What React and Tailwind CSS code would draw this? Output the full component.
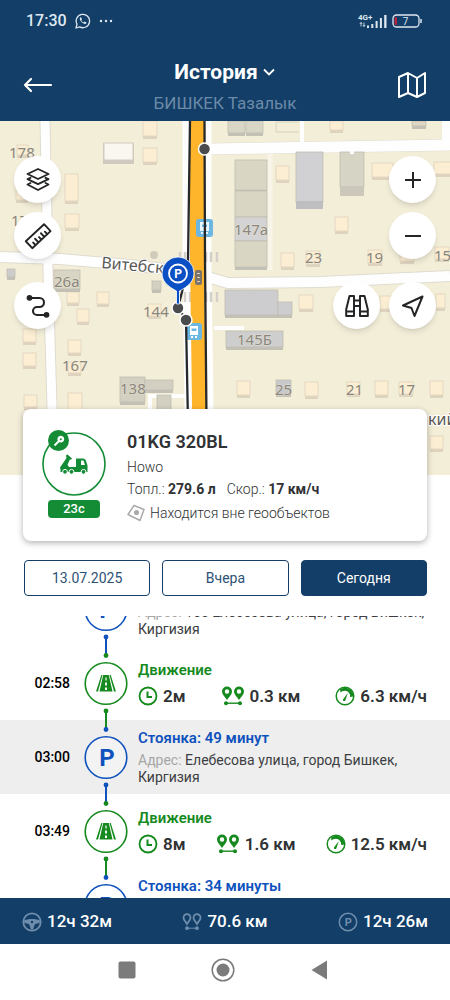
import React, { useLayoutEffect, useRef, useState } from 'react';

const GREEN = '#168a1e';
const BLUE = '#0f52bd';

const events = [
    { time: '02:15', type: 'stop', title: 'Стоянка: 43 минуты', address: '165 Елебесова улица, город Бишкек, Киргизия' },
    { time: '02:58', type: 'move', title: 'Движение', duration: '2м', distance: '0.3 км', speed: '6.3 км/ч' },
    { time: '03:00', type: 'stop', title: 'Стоянка: 49 минут', address: 'Елебесова улица, город Бишкек, Киргизия', active: true },
    { time: '03:49', type: 'move', title: 'Движение', duration: '8м', distance: '1.6 км', speed: '12.5 км/ч' },
    { time: '03:57', type: 'stop', title: 'Стоянка: 34 минуты', address: 'Елебесова улица, город Бишкек, Киргизия' },
];

const days = ['13.07.2025', 'Вчера', 'Сегодня'];

// x, y, width, height
const houses = [
    [143, 121, 14, 15], [143, 148, 14, 14], [65, 174, 13, 27], [65, 214, 14, 14], [16, 188, 12, 12], [17, 145, 11, 10],
    [67, 292, 12, 11], [97, 292, 12, 12], [77, 309, 12, 13], [23, 329, 13, 13], [23, 353, 13, 13], [68, 340, 13, 13],
    [68, 362, 13, 11], [24, 395, 13, 12], [68, 393, 14, 28], [24, 416, 13, 12], [148, 304, 13, 12],
    [330, 121, 13, 9], [276, 166, 13, 14], [372, 163, 21, 14], [434, 162, 22, 12], [335, 217, 13, 14], [281, 253, 13, 14],
    [306, 251, 14, 13], [368, 250, 14, 13], [400, 249, 14, 12], [435, 247, 14, 12], [299, 295, 14, 14], [380, 296, 11, 13],
    [436, 294, 9, 14], [237, 381, 13, 14], [305, 382, 13, 14], [347, 382, 13, 12], [375, 381, 13, 14], [399, 382, 14, 12],
    [430, 381, 13, 14], [430, 436, 13, 13], [334, 298, 10, 12],
];

const blocks = [
    [228, 121, 17, 12, '#d8d6c4'], [246, 121, 17, 12, '#d8d6c4'], [235, 160, 32, 30, '#d9d7c4'], [235, 191, 32, 26, '#d9d7c4'],
    [235, 217, 32, 24, '#d3d3d3'], [235, 241, 32, 26, '#d9d7c4'], [296, 152, 27, 50, '#d1d1d3'], [340, 152, 24, 35, '#d6d4c4'],
    [54, 270, 26, 19, '#d9d5c4'], [120, 377, 25, 25, '#d3d0c2'], [145, 380, 28, 10, '#d3d0c2'], [157, 395, 14, 20, '#d3d0c2'],
    [225, 290, 53, 25, '#cdcdd0'], [278, 302, 14, 13, '#cdcdd0'], [226, 331, 57, 16, '#cecece'], [276, 380, 15, 14, '#c9c9cb'],
    [152, 281, 9, 9, '#d3d0c2'], [7, 269, 8, 8, '#cccccc'], [412, 121, 14, 5, '#ded6c2'],
];

const labels = [
    ['178', 9, 158], ['17', 11, 226], ['26а', 54, 287], ['144', 143, 317], ['167', 62, 371], ['138', 120, 394],
    ['147а', 234, 235], ['145Б', 237, 345], ['23', 305, 263], ['19', 366, 263], ['15', 434, 261], ['25', 275, 395],
    ['21', 346, 395], ['17', 398, 395],
];

const MapCanvas = () => (
    <svg viewBox="0 121 450 354" preserveAspectRatio="xMidYMin slice" className="block w-full h-full" aria-hidden="true">
        <rect x="0" y="121" width="450" height="354" fill="#f3eed8" />
        <g fill="none" stroke="#dfdcd0" strokeWidth="12">
            <path d="M45 121 48 270 54 475" strokeWidth="11" />
            <path d="M0 257 60 259 130 265 190 272 228 283 320 282 450 276" />
            <path d="M208 149 450 145" />
        </g>
        <g fill="none" stroke="#fefefe" strokeWidth="10">
            <path d="M197 121 197 260 200 475" strokeWidth="29" />
            <path d="M45 121 48 270 54 475" strokeWidth="9" />
            <path d="M0 257 60 259 130 265 190 272 228 283 320 282 450 276" />
            <path d="M208 149 450 145" strokeWidth="11" />
            <path d="M302 121V145" strokeWidth="4" />
            <path d="M446 121V145" strokeWidth="8" />
            <path d="M214 328H244" strokeWidth="4" />
            <path d="M150 415V396H186" strokeWidth="4" />
            <path d="M270 154V270" stroke="#f8f5e8" strokeWidth="5" />
        </g>
        <path d="M299 132H276V122H299" fill="none" stroke="#d6d2c4" />
        {houses.map(([x, y, w, h], i) => (
            <g key={i}>
                <rect x={x} y={y} width={w} height={h + 3} fill="#ded3bf" />
                <rect x={x} y={y} width={w} height={h} fill="#fceed3" stroke="#e4d8c1" />
            </g>
        ))}
        {blocks.map(([x, y, w, h, fill], i) => (
            <g key={i}>
                <rect x={x} y={y} width={w} height={h + 3} fill="#c3c0b6" />
                <rect x={x} y={y} width={w} height={h} fill={fill} stroke="#c0bdb1" strokeWidth="0.8" />
            </g>
        ))}
        <rect x="340" y="186" width="24" height="10" fill="#cbc7ba" />
        <rect x="296" y="201" width="27" height="8" fill="#bebec1" />
        <path d="M352 148V154" stroke="#fefefe" strokeWidth="4" />
        <rect x="103" y="143" width="31" height="21" fill="#cfcac0" />
        <rect x="104" y="143" width="29" height="17" fill="#faf7f0" stroke="#d0ccc0" />
        <circle cx="154" cy="255" r="4" fill="#d0cbbb" />
        <g stroke="#d3cfc9" strokeWidth="2.500">
            <path d="M180 252v10M185 252v10M206 252v10M211 252v10M217 252v10M185 292v10M190 292v10M206 292v10M211 292v10M217 292v10" />
        </g>
        <g className="font-['Noto_Sans',sans-serif] text-[15px]" fill="#8a857d" stroke="#f3eed8" strokeOpacity="0.6" strokeWidth="1" paintOrder="stroke">
            {labels.map(([text, x, y], i) => (
                <text key={i} x={x} y={y}>{text}</text>
            ))}
        </g>
        <g className="font-['Noto_Sans',sans-serif] text-[16px]" fill="#5b5955" stroke="#ffffff" strokeWidth="2" paintOrder="stroke">
            <text x="101" y="268" transform="rotate(5 101 268)">Витебск</text>
            <text x="428" y="425">кий</text>
        </g>
        <path d="M197 121 197 260 200 475" fill="none" stroke="#ffb52b" strokeWidth="14" />
        <g>
            <rect x="196" y="219" width="17" height="18" rx="3" fill="#6cb6e2" />
            <path d="M200 222h9v9h-9z" fill="#e9f5fc" />
            <path d="M202 224.500h5v2.500h-5z" fill="#6cb6e2" />
            <path d="M201 233h2M206 233h2" stroke="#e9f5fc" strokeWidth="2" />
            <rect x="186" y="323" width="16" height="17" rx="3" fill="#6cb6e2" />
            <path d="M190 326h8v9h-8z" fill="#fff" />
            <path d="M191.500 328.500h5v2.500h-5z" fill="#6cb6e2" />
            <path d="M191 337h2M195 337h2" stroke="#fff" strokeWidth="2" />
            <rect x="195" y="270" width="7" height="15" rx="2" fill="#7a746a" />
            <path d="M198.500 273v1M198.500 277v1M198.500 281v1" stroke="#e9e3d6" strokeWidth="2.500" />
        </g>
        <g fill="none" stroke="#26282a" strokeWidth="2.300">
            <path d="M204.500 121 205 260 207 475" />
            <path d="M190 121 188 262 182 292 178 307 186 320 189 475" />
        </g>
        <g fill="#4a4b4d" stroke="#fff" strokeWidth="1.500">
            <circle cx="204.500" cy="149" r="6" />
            <circle cx="178" cy="308" r="6" />
            <circle cx="186" cy="320" r="6" />
        </g>
        <path d="M178 303V280" stroke="#fff" strokeWidth="4" />
        <path d="M178 257a16 16 0 0 1 16 16c0 8-5 13-14.500 18v13h-3v-13C167 286 162 281 162 273a16 16 0 0 1 16-16Z" fill="#0b4fc4" stroke="#fff" strokeWidth="0.8" />
        <circle cx="178" cy="273.500" r="9" fill="none" stroke="#fff" strokeWidth="1.800" />
        <text x="178" y="278" textAnchor="middle" fill="#fff" className="font-['Roboto',sans-serif] text-[12px] font-bold">P</text>
    </svg>
);

const MapButton = ({ label, children }) => (
    <button aria-label={label} className="size-[47px] rounded-full bg-white shadow-md flex items-center justify-center text-[#242526]">
        <svg viewBox="0 0 24 24" className="size-6 overflow-visible" fill="none" stroke="currentColor" strokeWidth="2" strokeLinejoin="round" strokeLinecap="round">
            {children}
        </svg>
    </button>
);

const ClockIcon = () => (
    <svg viewBox="0 0 20 20" className="size-5" fill="none" stroke="currentColor" strokeWidth="1.800">
        <circle cx="10" cy="10" r="8.500" />
        <path d="M9.500 5.500v5.500h4.500" strokeWidth="2" />
    </svg>
);

const DistanceIcon = () => (
    <svg viewBox="0 0 24 20" className="w-6 h-5" fill="currentColor">
        <path fillRule="evenodd" d="M6 .5a5 5 0 0 1 5 5C11 8.500 8 11 6 14 4 11 1 8.500 1 5.500a5 5 0 0 1 5-5Zm0 2.800a2.200 2.200 0 1 0 0 4.400 2.200 2.200 0 0 0 0-4.400Z" />
        <path fillRule="evenodd" d="M18 .5a5 5 0 0 1 5 5c0 3-3 5.500-5 8.500-2-3-5-5.500-5-8.500a5 5 0 0 1 5-5Zm0 2.800a2.200 2.200 0 1 0 0 4.400 2.200 2.200 0 0 0 0-4.400Z" />
        <circle cx="5" cy="17.200" r="2" />
        <circle cx="19" cy="17.200" r="2" />
        <path d="M5 16.500h14v1.400H5z" />
    </svg>
);

const SpeedIcon = () => (
    <svg viewBox="0 0 20 20" className="size-5">
        <circle cx="10" cy="10" r="8.800" fill="none" stroke="currentColor" strokeWidth="1.500" />
        <path d="M5 3.500A8.500 8.500 0 0 1 18.500 10.500l-3.300.5A5.600 5.600 0 0 0 10 4.800C8 4.800 6.500 5.500 5.500 6.500Z" fill="currentColor" />
        <path d="m12.800 7-4.300 5.700a1.300 1.300 0 1 0 2 1.200Z" fill="currentColor" />
    </svg>
);

const Marker = ({ type, prev, next }) => {
    const colorOf = (t) => (t === 'move' ? GREEN : BLUE);
    const color = colorOf(type);
    return (
        <svg viewBox="0 0 44 74" className="w-11 h-[74px] shrink-0" aria-hidden="true">
            {prev && (
                <>
                    <path d="M22 0v10" stroke={colorOf(prev)} strokeWidth="2" />
                    <circle cx="22" cy="9.500" r="2.400" fill={color} />
                </>
            )}
            {next && (
                <>
                    <path d="M22 65v9" stroke={color} strokeWidth="2" />
                    <circle cx="22" cy="65" r="2.400" fill={color} />
                </>
            )}
            <circle cx="22" cy="37.500" r="20.800" fill="#fff" fillOpacity={type === 'stop' ? 0.3 : 1} stroke={color} strokeWidth="1.600" />
            {type === 'move' ? (
                <g fill={color}>
                    <path d="M17.300 29h1.200l-4.500 16.500h-2ZM26.700 29h-1.200l4.500 16.500h2Z" />
                    <path d="M19.200 29h5.600L28.500 45.500h-13Z" />
                    <path d="M21.400 31.500h1.200v3h-1.200zM21.100 36.500h1.800v3h-1.800zM21 41.500h2v2.500h-2z" fill="#fff" />
                </g>
            ) : (
                <text x="23" y="46" textAnchor="middle" fill={color} className="font-['Roboto',sans-serif] text-[24px] font-bold">P</text>
            )}
        </svg>
    );
};

const EventRow = ({ event, prev, next }) => (
    <li className={`flex pr-[23px] ${event.active ? 'bg-[#eeeeee]' : 'bg-white'}`}>
        <time className="w-[84px] pr-[14px] self-center text-right text-[14px] font-medium text-black">{event.time}</time>
        <Marker type={event.type} prev={prev} next={next} />
        {event.type === 'move' ? (
            <div className="flex-1 ml-[10px] pt-[2px] flex flex-col justify-center">
                <h3 className="text-[15px] leading-5 font-semibold text-[#168a1e]">{event.title}</h3>
                <div className="mt-1 flex justify-between text-[17px] leading-6 font-semibold text-[#303234]">
                    <span className="flex items-center gap-[5px]"><i className="text-[#168a1e]"><ClockIcon /></i>{event.duration}</span>
                    <span className="flex items-center gap-[5px]"><i className="text-[#168a1e]"><DistanceIcon /></i>{event.distance}</span>
                    <span className="flex items-center gap-[5px]"><i className="text-[#168a1e]"><SpeedIcon /></i>{event.speed}</span>
                </div>
            </div>
        ) : (
            <div className="flex-1 ml-[10px] flex flex-col justify-center">
                <h3 className="text-[15px] leading-5 font-semibold text-[#0f52bd]">{event.title}</h3>
                <p className="mt-1 text-[14px] leading-[17px] text-[#3c3e42]">
                    <span className="text-[#a6a6a6]">Адрес:</span> {event.address}
                </p>
            </div>
        )}
    </li>
);

const StatusBar = () => (
    <div className="h-[41px] pl-[26px] pr-7 flex items-center justify-between text-[#dfe8f0]">
        <div className="flex items-center gap-2">
            <span className="text-[16px] font-medium">17:30</span>
            <svg viewBox="0 0 16 16" className="size-4" fill="none" stroke="currentColor" strokeWidth="1.300">
                <path d="M1 15l1-3.800a6.700 6.700 0 1 1 2.700 2.700Z" strokeLinejoin="round" />
                <path d="M5.500 4.300c-1.500 1.200-.5 3.200 1 4.700s3.600 2.600 4.900 1.300l-.2-1-1.700-.8-.9 1C7.500 9 6.700 8.300 6.300 7.200l.7-.9-.8-1.900Z" fill="currentColor" stroke="none" />
            </svg>
            <svg viewBox="0 0 14 4" className="w-[14px] h-1" fill="currentColor">
                <circle cx="2" cy="2" r="1.200" />
                <circle cx="7" cy="2" r="1.200" />
                <circle cx="12" cy="2" r="1.200" />
            </svg>
        </div>
        <div className="flex items-center gap-[5px]">
            <svg viewBox="0 0 29 16" className="w-[29px] h-4 overflow-visible" fill="currentColor">
                <text x="0" y="7" className="font-['Roboto',sans-serif] text-[8px] font-bold">4G+</text>
                <path d="M3 9.500v4M1.800 11 3 9.500 4.200 11M6 13.500v-4M4.800 12 6 13.500 7.200 12" fill="none" stroke="currentColor" strokeWidth="0.8" />
                <path d="M9 12.500h2V15H9zM13.300 11h2v4h-2zM17.600 8h2v7h-2zM21.900 5h2v10h-2zM26.200 2h2.300v13h-2.300z" />
            </svg>
            <svg viewBox="0 0 30 14" className="w-[30px] h-[14px]">
                <rect x="1" y="1" width="26" height="12" rx="3.500" fill="none" stroke="currentColor" strokeWidth="1.300" />
                <rect x="2.500" y="3" width="2.500" height="8" rx="1" fill="#b3243c" />
                <path d="M29 5v4" stroke="currentColor" strokeWidth="1.500" />
                <text x="13.500" y="10.500" textAnchor="middle" fill="currentColor" className="font-['Roboto',sans-serif] text-[10px]">7</text>
            </svg>
        </div>
    </div>
);

const App = () => {
    const [day, setDay] = useState('Сегодня');
    const listRef = useRef(null);

    useLayoutEffect(() => {
        listRef.current.scrollTop = 44;
    }, []);

    return (
        <div className="h-screen flex flex-col bg-white font-['Roboto',sans-serif] overflow-hidden">
            <header className="bg-[#123e67] text-white shrink-0">
                <StatusBar />
                <div className="h-20 pt-2 px-[23px] flex items-center justify-between">
                    <button aria-label="Назад">
                        <svg viewBox="0 0 30 16" className="w-[30px] h-4" fill="none" stroke="currentColor" strokeWidth="2.200" strokeLinecap="round" strokeLinejoin="round">
                            <path d="M28 8H2M8 2 2 8l6 6" />
                        </svg>
                    </button>
                    <div className="pt-1 flex flex-col items-center">
                        <button className="mb-[7px] flex items-center gap-1 text-[21px] leading-6 font-bold">
                            <h1>История</h1>
                            <svg viewBox="0 0 14 14" className="size-[14px]" fill="none" stroke="currentColor" strokeWidth="1.800">
                                <path d="m2 4.500 5 5 5-5" />
                            </svg>
                        </button>
                        <p className="text-[17px] leading-6 text-[#6c8aa9]">БИШКЕК Тазалык</p>
                    </div>
                    <button aria-label="Карта">
                        <svg viewBox="0 0 30 28" className="w-[30px] h-7" fill="none" stroke="currentColor" strokeWidth="2" strokeLinejoin="round">
                            <path d="m2 6 9-4 9 5 8-5v20l-8 4-9-4-9 4ZM11 2v20M20 7v19" />
                        </svg>
                    </button>
                </div>
            </header>

            <section className="relative h-[354px] shrink-0" aria-label="Карта">
                <MapCanvas />
                <div className="absolute inset-x-[14px] top-[35px] flex justify-between">
                    <div className="flex flex-col gap-[9px]">
                        <MapButton label="Слои">
                            <path d="m12 1 10.500 5L12 11 1.500 6ZM4.500 9.800l-3 1.400 10.500 5 10.500-5-3-1.400M4.500 15l-3 1.500L12 22l10.500-5.500-3-1.500" strokeWidth="1.900" />
                        </MapButton>
                        <MapButton label="Линейка">
                            <g transform="rotate(-43 12 12)">
                                <path d="M-.5 7.500h25v9.500h-25ZM4 17v-3.500M8 17v-5M12 17v-3.500M16 17v-5M20 17v-3.500" strokeWidth="1.900" />
                            </g>
                        </MapButton>
                        <div className="mt-[14px]">
                            <MapButton label="Маршрут">
                                <path d="M3.500 4h10a4.500 4.500 0 0 1 0 9H11a4 4 0 0 0 0 8h9.500" strokeWidth="2.100" />
                                <circle cx="3.500" cy="3.800" r="1.900" fill="currentColor" />
                                <circle cx="20.500" cy="20.800" r="1.900" fill="currentColor" />
                            </MapButton>
                        </div>
                    </div>
                    <div className="flex flex-col items-end gap-[9px]">
                        <MapButton label="Приблизить">
                            <path d="M12 4v16M4 12h16" strokeLinecap="butt" />
                        </MapButton>
                        <MapButton label="Отдалить">
                            <path d="M4 12h16" strokeLinecap="butt" />
                        </MapButton>
                        <div className="mt-[14px] flex gap-[9px]">
                            <MapButton label="Наблюдение">
                                <path d="M4.500 2h4.500v20H1.200v-6.500L4.500 2ZM19.500 2H15v20h7.800v-6.500L19.500 2ZM9 6.500h6M9 12h6M1.200 17.500H9M15 17.500h7.800" strokeWidth="2" />
                            </MapButton>
                            <MapButton label="Моё местоположение">
                                <path d="M21.500 2.500 2 11.500l8.500 2.500 3 8Z" />
                            </MapButton>
                        </div>
                    </div>
                </div>
            </section>

            <article className="relative -mt-[66px] mx-[23px] pl-[18px] pr-4 pt-[22px] pb-[18px] flex shrink-0 rounded-lg bg-white shadow-[0_2px_6px_rgba(0,0,0,0.3)]">
                <div className="relative flex flex-col items-center w-[66px]">
                    <svg viewBox="0 0 66 66" className="size-[66px]" aria-hidden="true">
                        <circle cx="33" cy="33" r="31" fill="none" stroke="#148c36" strokeWidth="1.600" />
                        <g fill="#148c36" transform="translate(18 23)">
                            <path d="M1 13.500 7.500 4 7 1.200 8.500.5l4.500 4-1 1.300-1-.6-2.500 5.600 1.500 2.200h7V4.500h7c1.500 0 2.500 1 3 2.500l1.500 4.500v6.500H1.500v-2.500Z" />
                            <path d="M22 6.500h2.500l1.500 4.500h-4Z" fill="#fff" />
                            <circle cx="6" cy="17.800" r="2.400" stroke="#fff" />
                            <circle cx="12.500" cy="17.800" r="2.400" stroke="#fff" />
                            <circle cx="24.500" cy="17.800" r="2.400" stroke="#fff" />
                        </g>
                    </svg>
                    <span className="absolute left-[7px] -top-px size-[21px] rounded-full bg-[#148c36] flex items-center justify-center">
                        <svg viewBox="0 0 12 12" className="size-3" fill="none" stroke="#fff">
                            <circle cx="7.800" cy="4.200" r="2.200" strokeWidth="2.400" />
                            <path d="M6 6 1.500 10.500" strokeWidth="2" />
                        </svg>
                    </span>
                    <span className="mt-[3px] w-[52px] h-[18px] rounded bg-[#148c36] text-white text-[13px] leading-[18px] font-medium text-center">23с</span>
                </div>
                <div className="ml-5 flex-1 text-[14px] font-light text-[#303234]">
                    <h2 className="text-[18px] leading-[22px] font-semibold">01KG 320BL</h2>
                    <p className="mt-1 leading-5">Howo</p>
                    <p className="mt-[2px] leading-5 flex gap-[11px]">
                        <span>Топл.: <b className="font-bold">279.6 л</b></span>
                        <span>Скор.: <b className="font-bold">17 км/ч</b></span>
                    </p>
                    <p className="mt-1 leading-5 flex items-center gap-[5px]">
                        <svg viewBox="0 0 18 18" className="size-[18px]" fill="none" stroke="#aaaaaa" strokeWidth="1.500" strokeLinejoin="round">
                            <path d="M7 1.500 17 5.500 13 16.500 1 10.500Z" />
                            <circle cx="9.500" cy="8.500" r="1.800" fill="#aaaaaa" />
                        </svg>
                        Находится вне геообъектов
                    </p>
                </div>
            </article>

            <div className="mt-[19px] ml-6 mr-[23px] flex gap-3 shrink-0">
                {days.map((item) => (
                    <button
                        key={item}
                        onClick={() => setDay(item)}
                        className={`flex-1 h-9 rounded border border-[#123e67] text-[14px] ${day === item ? 'bg-[#123e67] text-white' : 'bg-white text-[#2d5176]'}`}
                    >
                        {item}
                    </button>
                ))}
            </div>

            <ul ref={listRef} className="mt-5 flex-1 min-h-0 overflow-y-auto [scrollbar-width:none]">
                {events.map((event, i) => (
                    <EventRow key={event.time} event={event} prev={events[i - 1]?.type} next={events[i + 1]?.type} />
                ))}
            </ul>

            <footer className="shrink-0">
                <div className="h-[46px] pt-[2px] px-[22px] bg-[#123e67] text-white text-[17px] font-medium flex items-center justify-between">
                    <span className="flex items-center gap-[5px]">
                        <svg viewBox="0 0 20 20" className="size-5 text-[#6f8dac]" fill="none" stroke="currentColor" strokeWidth="1.800">
                            <circle cx="10" cy="10" r="8.700" />
                            <path d="M2 8.500c4-2 12-2 16 0l-.5 2.500-4.500 1-2 5.500H9L7 12l-4.500-1Z" fill="currentColor" stroke="none" />
                            <circle cx="10" cy="10" r="1.200" fill="#123e67" stroke="none" />
                        </svg>
                        12ч 32м
                    </span>
                    <span className="flex items-center gap-[5px]">
                        <svg viewBox="0 0 20 18" className="w-5 h-[18px] text-[#6f8dac]" fill="none" stroke="currentColor" strokeWidth="1.800">
                            <path d="M5 11C3.500 8.500 1.500 7 1.500 4.700a3.500 3.500 0 0 1 7 0C8.500 7 6.500 8.500 5 11ZM15 11c-1.500-2.500-3.500-4-3.500-6.300a3.500 3.500 0 0 1 7 0C18.500 7 16.500 8.500 15 11Z" />
                            <path d="M5 15.200h10" strokeWidth="1" />
                            <circle cx="5" cy="15.200" r="1" />
                            <circle cx="15" cy="15.200" r="1" />
                        </svg>
                        70.6 км
                    </span>
                    <span className="flex items-center gap-[5px]">
                        <svg viewBox="0 0 20 20" className="size-5 text-[#6f8dac]">
                            <circle cx="10" cy="10" r="8.700" fill="none" stroke="currentColor" strokeWidth="1.500" />
                            <text x="10.300" y="14" textAnchor="middle" fill="currentColor" className="font-['Roboto',sans-serif] text-[11px] font-bold">P</text>
                        </svg>
                        12ч 26м
                    </span>
                </div>
                <nav className="h-14 pb-1 pr-1 flex items-center justify-center gap-[72px] text-[#7b7b7b]">
                    <button aria-label="Недавние">
                        <svg viewBox="0 0 24 24" className="size-6" fill="currentColor"><rect x="3.500" y="3.500" width="17" height="17" rx="2" /></svg>
                    </button>
                    <button aria-label="Домой">
                        <svg viewBox="0 0 24 24" className="size-6" fill="currentColor">
                            <circle cx="12" cy="12" r="10.800" fill="none" stroke="currentColor" strokeWidth="1.500" />
                            <circle cx="12" cy="12" r="6.500" />
                        </svg>
                    </button>
                    <button aria-label="Вернуться">
                        <svg viewBox="0 0 24 24" className="size-6" fill="currentColor"><path d="M20 2.500v19L4.500 12Z" /></svg>
                    </button>
                </nav>
            </footer>
        </div>
    );
};

export default App;
